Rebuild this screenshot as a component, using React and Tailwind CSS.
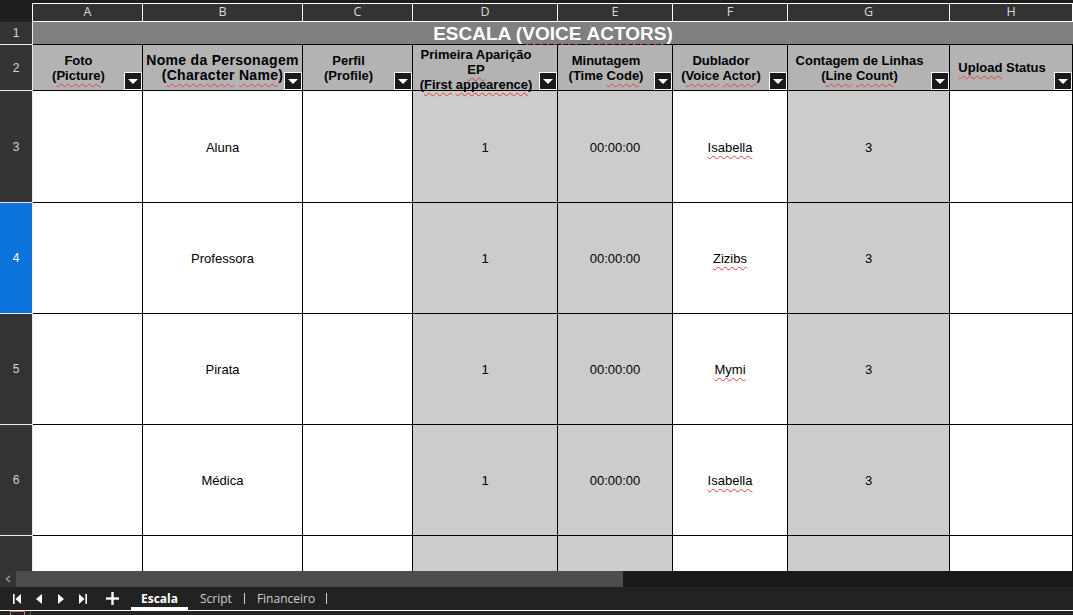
import React from 'react';

const cols = [
    { k: 'A', w: 'w-[110px] shrink-0', gray: false },
    { k: 'B', w: 'w-[160px] shrink-0', gray: false },
    { k: 'C', w: 'w-[110px] shrink-0', gray: false },
    { k: 'D', w: 'w-[145px] shrink-0', gray: true },
    { k: 'E', w: 'w-[115px] shrink-0', gray: true },
    { k: 'F', w: 'w-[115px] shrink-0', gray: false },
    { k: 'G', w: 'w-[162px] shrink-0', gray: true },
    { k: 'H', w: 'flex-1 min-w-0', gray: false },
];

const rows = [
    { n: 3, name: 'Aluna', actor: 'Isabella', h: 'h-[112px]' },
    { n: 4, name: 'Professora', actor: 'Zizibs', selected: true, h: 'h-[111px]' },
    { n: 5, name: 'Pirata', actor: 'Mymi', h: 'h-[111px]' },
    { n: 6, name: 'Médica', actor: 'Isabella', h: 'h-[111px]' },
];

// red squiggle like the spell checker
const Sp = ({ children }) => (
    <span className="underline decoration-wavy decoration-[#e04040] decoration-1 underline-offset-[3px]">{children}</span>
);

const Dropdown = () => (
    <div className="absolute right-0 bottom-0 w-[18px] h-[18px] bg-[#1a1a1a] border border-white flex items-center justify-center">
        <svg width="10" height="6" viewBox="0 0 10 6" className="mt-[2px]">
            <polygon points="0,0 10,0 5,5" fill="#fff" />
        </svg>
    </div>
);

const headers = [
    <>Foto<br />(<Sp>Picture</Sp>)</>,
    <span className="text-[14px] tracking-[0.3px]">Nome da Personagem<br />(<Sp>Character</Sp> <Sp>Name</Sp>)</span>,
    <>Perfil<br />(Profile)</>,
    <>Primeira Aparição<br /><Sp>EP</Sp><br />(<Sp>First</Sp> <Sp>appearence</Sp>)</>,
    <>Minutagem<br />(Time <Sp>Code</Sp>)</>,
    <>Dublador<br />(<Sp>Voice</Sp> <Sp>Actor</Sp>)</>,
    <>Contagem de Linhas<br />(<Sp>Line</Sp> <Sp>Count</Sp>)</>,
    <><Sp>Upload</Sp> Status</>,
];

const RowHead = ({ label, selected, className = '' }) => (
    <div className={`w-[33px] shrink-0 border-r border-b border-white/90 flex items-center justify-center text-[12px] ${selected ? 'bg-[#0a74da] text-white' : 'bg-[#333333] text-[#d6d6d6]'} ${className}`}>
        {label}
    </div>
);

const NavIcon = ({ type }) => (
    <svg width="10" height="12" viewBox="0 0 10 12">
        {type === 'first' && <><rect x="1" y="1" width="1.6" height="10" fill="#fff" /><polygon points="9,1 9,11 3.5,6" fill="#fff" /></>}
        {type === 'prev' && <polygon points="8,1 8,11 2,6" fill="#fff" />}
        {type === 'next' && <polygon points="2,1 2,11 8,6" fill="#fff" />}
        {type === 'last' && <><polygon points="1,1 1,11 6.5,6" fill="#fff" /><rect x="7.4" y="1" width="1.6" height="10" fill="#fff" /></>}
    </svg>
);

export default function App() {
    return (
        <div className="w-[1073px] h-[615px] bg-[#222222] overflow-hidden flex flex-col font-['Liberation_Sans',Arial,sans-serif]">
            <div className="h-[3px] shrink-0 bg-[#1f1f1f]" />

            {/* column letters */}
            <div className="h-[19px] shrink-0 flex">
                <div className="w-[33px] shrink-0 bg-[#1f1f1f] border-r border-white" />
                {cols.map(c => (
                    <div key={c.k} className={`${c.w} bg-[#333333] border-y border-r border-white flex items-center justify-center text-[12.5px] text-[#dadada] font-['Open_Sans',sans-serif]`}>
                        {c.k}
                    </div>
                ))}
            </div>

            {/* row 1: title */}
            <div className="h-[23px] shrink-0 flex">
                <RowHead label="1" />
                <div className="flex-1 bg-[#808080] border-b border-black flex items-center justify-center text-white font-bold text-[19px] leading-none">
                    ESCALA (<Sp>VOICE</Sp>&nbsp;<Sp>ACTORS</Sp>)
                </div>
            </div>

            {/* row 2: headers */}
            <div className="h-[46px] shrink-0 flex">
                <RowHead label="2" />
                {cols.map((c, i) => (
                    <div key={c.k} className={`${c.w} relative bg-[#b3b3b3] border-r border-b border-black flex items-center justify-center text-center text-[13px] leading-[15px] font-bold text-black whitespace-nowrap overflow-visible ${i === 1 ? '' : 'pr-[18px]'}`}>
                        <div className={i === 3 ? 'pt-[3px]' : ''}>{headers[i]}</div>
                        <Dropdown />
                    </div>
                ))}
            </div>

            {/* data rows */}
            {rows.map(r => (
                <div key={r.n} className={`${r.h} shrink-0 flex`}>
                    <RowHead label={r.n} selected={r.selected} />
                    {cols.map((c, i) => {
                        let v = null;
                        if (i === 1) v = r.name;
                        if (i === 3) v = '1';
                        if (i === 4) v = '00:00:00';
                        if (i === 5) v = <Sp>{r.actor}</Sp>;
                        if (i === 6) v = '3';
                        return (
                            <div key={c.k} className={`${c.w} ${c.gray ? 'bg-[#cccccc]' : 'bg-white'} border-r border-b border-black flex items-center justify-center pt-[2px] text-[13px] text-black`}>
                                {v}
                            </div>
                        );
                    })}
                </div>
            ))}

            {/* partial row 7 */}
            <div className="flex-1 flex min-h-0">
                <RowHead label="" className="border-b-0" />
                {cols.map(c => (
                    <div key={c.k} className={`${c.w} ${c.gray ? 'bg-[#cccccc]' : 'bg-white'} border-r border-black`} />
                ))}
            </div>

            {/* horizontal scrollbar */}
            <div className="h-[16px] shrink-0 flex bg-[#1a1a1a]">
                <div className="w-[16px] bg-[#333333] flex items-center justify-center">
                    <svg width="6" height="8" viewBox="0 0 6 8"><polyline points="5,1 1.5,4 5,7" fill="none" stroke="#9a9a9a" strokeWidth="1.4" /></svg>
                </div>
                <div className="w-[607px] bg-[#4d4d4d]" />
            </div>

            {/* sheet tabs */}
            <div className="h-[23px] shrink-0 flex items-center bg-[#222222] text-[12px] font-['Open_Sans',sans-serif]">
                <div className="flex items-center gap-[12px] pl-[12px]">
                    <NavIcon type="first" />
                    <NavIcon type="prev" />
                    <NavIcon type="next" />
                    <NavIcon type="last" />
                </div>
                <svg width="13" height="13" viewBox="0 0 13 13" className="ml-[18px]">
                    <rect x="5.3" y="0" width="2.4" height="13" fill="#fff" />
                    <rect x="0" y="5.3" width="13" height="2.4" fill="#fff" />
                </svg>
                <div className="ml-[12px] w-[57px] h-full flex items-center justify-center font-bold text-white border-b-[3px] border-white pt-[3px]">Escala</div>
                <div className="ml-[12px] text-[#cfcfcf]">Script</div>
                <div className="ml-[12px] w-px h-[11px] bg-[#cfcfcf]" />
                <div className="ml-[12px] text-[#cfcfcf]">Financeiro</div>
                <div className="ml-[11px] w-px h-[11px] bg-[#cfcfcf]" />
            </div>

            {/* status bar */}
            <div className="h-[5px] shrink-0 border-t border-white bg-[#232323] flex items-start">
                <div className="ml-[10px] w-[15px] h-full border border-[#e07070] border-b-0" />
                <div className="ml-[5px] w-px h-full bg-[#555]" />
            </div>
        </div>
    );
}
